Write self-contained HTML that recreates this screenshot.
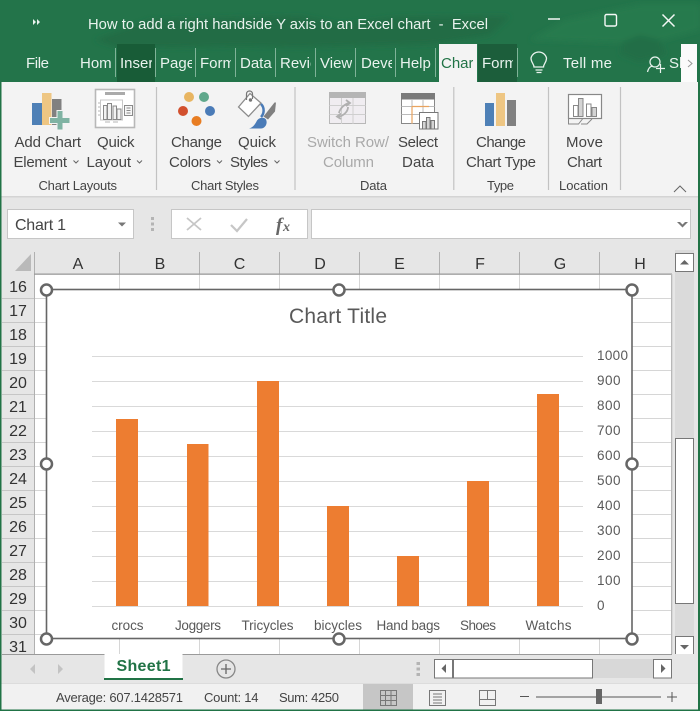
<!DOCTYPE html>
<html><head><meta charset="utf-8"><style>
html,body{margin:0;padding:0;background:#fff}
svg{display:block;font-family:"Liberation Sans",sans-serif}
.t{fill:#e9f3ee;font-size:15px}
.r{fill:#444;font-size:15px}
.g{fill:#444;font-size:13px}
.d{fill:#a9a9a9;font-size:15px}
.h{fill:#333;font-size:16px;text-anchor:middle}
.n{fill:#333;font-size:16px;text-anchor:middle}
.c{fill:#595959;font-size:13.5px}
.s{fill:#444;font-size:13px}
</style></head><body>
<svg width="700" height="711" viewBox="0 0 700 711" xmlns="http://www.w3.org/2000/svg">
<defs><filter id="b" x="-20%" y="-50%" width="140%" height="200%"><feGaussianBlur stdDeviation="3"/></filter></defs>
<rect width="700" height="711" fill="#e6e6e6"/>
<!-- title bar -->
<rect width="700" height="82" fill="#23744a"/>
<g filter="url(#b)">
<path d="M95 40 L150 20 L300 16 L340 24 L400 17 L510 16 L490 35 L430 44 L300 47 L240 46 L120 48Z" fill="#206c45"/>
<path d="M530 40 L565 20 L640 4 L700 4 L700 30 L650 44 Z" fill="#257a4e"/>
<path d="M622 42 L640 35 L660 40 L666 54 L640 62 L620 54Z" fill="#216e47"/>
</g>
<path d="M33 19 l3 3 l-3 3z M37 19 l3 3 l-3 3z" fill="#e9f3ee"/>
<text class="t" x="88" y="29" textLength="400" lengthAdjust="spacingAndGlyphs" xml:space="preserve">How to add a right handside Y axis to an Excel chart  -  Excel</text>
<path d="M548 19H560" stroke="#f4f8f6" stroke-width="1.500" fill="none"/>
<rect x="605" y="14.500" width="11.500" height="11.500" rx="1.500" fill="none" stroke="#f4f8f6" stroke-width="1.400"/>
<path d="M662.500 14.500l12 12M674.500 14.500l-12 12" stroke="#f4f8f6" stroke-width="1.500" fill="none"/>
<!-- tabs -->
<rect x="117" y="44" width="38" height="38" fill="#185c37"/>
<rect x="439" y="44" width="38" height="38" fill="#f3f3f3"/>
<rect x="478" y="44" width="39" height="38" fill="#1c5e3b"/>
<g stroke="#7fb398" stroke-width="1">
<path d="M115.500 48V77M155.500 48V77M195.500 48V77M235.500 48V77M275.500 48V77M315.500 48V77M355.500 48V77M395.500 48V77M435.500 48V77M517.500 48V77"/>
</g>
<text class="t" x="26" y="68" textLength="23">File</text>
<svg x="80" y="44" width="31" height="38"><text class="t" x="0" y="24">Hom</text></svg>
<svg x="120" y="44" width="32" height="38"><text class="t" x="0" y="24">Inser</text></svg>
<svg x="160" y="44" width="32" height="38"><text class="t" x="0" y="24">Page</text></svg>
<svg x="200" y="44" width="31" height="38"><text class="t" x="0" y="24">Form</text></svg>
<svg x="240" y="44" width="32" height="38"><text class="t" x="0" y="24">Data</text></svg>
<svg x="280" y="44" width="31" height="38"><text class="t" x="0" y="24">Revie</text></svg>
<svg x="320" y="44" width="32" height="38"><text class="t" x="0" y="24">View</text></svg>
<svg x="361" y="44" width="31" height="38"><text class="t" x="0" y="24">Deve</text></svg>
<svg x="400" y="44" width="32" height="38"><text class="t" x="0" y="24">Help</text></svg>
<svg x="441" y="44" width="32" height="38"><text class="t" x="0" y="24" style="fill:#217346">Char</text></svg>
<svg x="482" y="44" width="31" height="38"><text class="t" x="0" y="24">Form</text></svg>
<path d="M534 67c0-3-3-4.500-3-9a8 8 0 0 1 15.500 0c0 4.500-3 6-3 9zM535.500 70h7M536.500 72.500h5" fill="none" stroke="#e9f3ee" stroke-width="1.300"/>
<text class="t" x="563" y="68" textLength="49">Tell me</text>
<circle cx="655" cy="62" r="5" fill="none" stroke="#e9f3ee" stroke-width="1.200"/>
<path d="M647.500 72c1-4.500 3.500-6 5.500-6M656 68.500h9M660.500 64v9" fill="none" stroke="#e9f3ee" stroke-width="1.200"/>
<svg x="669" y="44" width="12" height="38"><text class="t" x="0" y="24">Sh</text></svg>
<rect x="681" y="44" width="16" height="38" fill="#fbfbfb"/>
<path d="M688 60l4 3.500l-4 3.500" fill="none" stroke="#999" stroke-width="1"/>
<!-- ribbon -->
<rect x="0" y="82" width="700" height="114" fill="#f3f3f3"/>
<rect x="0" y="196" width="700" height="1.500" fill="#d4d4d4"/>
<g stroke="#c2c2c2" stroke-width="1.200"><path d="M156.500 87V190M295 87V190M453.800 87V190M548.500 87V190M620.500 87V190"/></g>
<!-- add chart -->
<rect x="32" y="103" width="10" height="22" fill="#4e80b6"/>
<rect x="42" y="93" width="9.500" height="32" fill="#eec683"/>
<rect x="52" y="99" width="9.500" height="26" fill="#808080"/>
<path d="M49 117h7.500v-7h7v7h7v7h-7v7h-7v-7h-7.500z" fill="#f3f3f3"/>
<path d="M50 118h7.500v-7h5v7h7v5h-7v6.500h-5v-6.500h-7.500z" fill="#7fb3a3"/>
<!-- quick layout -->
<rect x="95.500" y="89.500" width="39" height="38" fill="#fff" stroke="#b8b8b8" stroke-width="1.600"/>
<rect x="105" y="92" width="20" height="3" fill="#aaa"/>
<rect x="100.500" y="100" width="22" height="20" fill="none" stroke="#c8c8c8"/>
<g fill="#f2f2f2" stroke="#888"><rect x="103.500" y="105.500" width="3.500" height="14"/><rect x="107.500" y="103.500" width="4" height="16"/><rect x="113" y="106" width="3.500" height="13.500"/><rect x="117" y="109" width="4" height="10.500"/></g>
<path d="M98 103h2M98 107h2M98 111h2M98 115h2M105 122h5M113 122h5" stroke="#b5b5b5" fill="none"/>
<rect x="124.500" y="105.500" width="8" height="10" fill="#f7f7f7" stroke="#8a8a8a"/>
<path d="M126.500 108h4M126.500 110.500h4M126.500 113h4" stroke="#8a8a8a" fill="none"/>
<!-- colors -->
<circle cx="189" cy="97" r="5" fill="#e8b561"/><circle cx="204" cy="97" r="5" fill="#60a88c"/>
<circle cx="183" cy="111" r="5" fill="#d2502e"/><circle cx="210" cy="111" r="5" fill="#4a7bb7"/><circle cx="196.500" cy="121" r="5" fill="#e87d22"/>
<!-- styles -->
<path d="M238.500 107L250 93.500L261 103L248.500 116.500Z" fill="#fff" stroke="#8c8c8c" stroke-width="1.300"/>
<path d="M246.500 100v-6c0-4 6-4 6 0v5" fill="none" stroke="#777" stroke-width="1.200"/>
<circle cx="250.500" cy="100" r="1.700" fill="#777"/>
<path d="M261 104c4 4 3 10 0 13" stroke="#4a7bb7" stroke-width="2.500" fill="none"/>
<path d="M249 128.500c4-1 6-4 8-8c2-3 7-4 9-1c2 4-1 9-5 9z" fill="#4a7bb7"/>
<path d="M263.500 116.500l11-14l1.500 0l-1 9l-7 8z" fill="#808080"/>
<!-- switch -->
<rect x="329.500" y="92.500" width="36" height="31" fill="#f0edf1" stroke="#b8b8b8"/>
<rect x="329" y="92" width="37" height="6" fill="#b5b5b5"/>
<path d="M341.500 98v26M353 98v26M329.500 105.500h36M329.500 114.500h36" stroke="#cfcfcf" fill="none"/>
<path d="M339 113c1-5 6-9 10-10M346 100l4 3l-4 3M348 107c0 5-5 9-10 10M341 119l-4-2.500l4-3" fill="none" stroke="#b0b0b0" stroke-width="1.800"/>
<!-- select -->
<rect x="401.500" y="93.500" width="33" height="30" fill="#fff" stroke="#888"/>
<rect x="401" y="93" width="34" height="6.500" fill="#7a7a7a"/>
<path d="M412 99v25M423 99v25M401.500 106.500h33M401.500 114.500h33" stroke="#bbb" fill="none"/>
<path d="M412 106.500h17M412 106.500v17" stroke="#e9a35f" fill="none" stroke-width="1.200"/>
<rect x="419.500" y="112.500" width="18.500" height="16.500" fill="#fff" stroke="#777"/>
<g fill="#d4d4d4" stroke="#777"><rect x="422.500" y="121.500" width="3.500" height="7.500"/><rect x="426.500" y="117.500" width="3.500" height="11.500"/><rect x="431" y="120.500" width="3.500" height="8.500"/></g>
<!-- change type -->
<rect x="485" y="103" width="9" height="23" fill="#4e80b6"/>
<rect x="496" y="93" width="9" height="33" fill="#eec683"/>
<rect x="507" y="100" width="9" height="26" fill="#808080"/>
<!-- move -->
<rect x="568.500" y="94.500" width="33" height="24" fill="#fff" stroke="#888" stroke-width="1.200"/>
<rect x="573.500" y="105.500" width="4.500" height="11" fill="#fff" stroke="#888"/>
<rect x="578.500" y="98.500" width="4.500" height="18" fill="#d4d4d4" stroke="#888"/>
<rect x="586.500" y="104" width="4.500" height="12.500" fill="#fff" stroke="#888"/>
<rect x="592" y="107.500" width="4.500" height="9" fill="#d4d4d4" stroke="#888"/>
<path d="M568.500 119v5h10l4-5M581 124h6l5-5" fill="none" stroke="#888"/>
<!-- ribbon labels -->
<text class="r" x="14.500" y="147" textLength="66.500">Add Chart</text>
<text class="r" x="13.500" y="167" textLength="53.500">Element</text>
<text class="r" x="97" y="147" textLength="37.500">Quick</text>
<text class="r" x="86.500" y="167" textLength="44.500">Layout</text>
<text class="r" x="171" y="147" textLength="51">Change</text>
<text class="r" x="169" y="167" textLength="42">Colors</text>
<text class="r" x="238" y="147" textLength="38">Quick</text>
<text class="r" x="230" y="167" textLength="38">Styles</text>
<text class="d" x="307" y="147" textLength="82">Switch Row/</text>
<text class="d" x="323" y="167" textLength="51">Column</text>
<text class="r" x="398" y="147" textLength="40">Select</text>
<text class="r" x="402" y="167" textLength="32">Data</text>
<text class="r" x="476" y="147" textLength="50">Change</text>
<text class="r" x="466" y="167" textLength="70">Chart Type</text>
<text class="r" x="566" y="147" textLength="37">Move</text>
<text class="r" x="567" y="167" textLength="35">Chart</text>
<path d="M73.500 160.500l2.500 2.500l2.500-2.500M137 160.500l2.500 2.500l2.500-2.500M217 160.500l2.500 2.500l2.500-2.500M274.500 160.500l2.500 2.500l2.500-2.500" fill="none" stroke="#666" stroke-width="1"/>
<text class="g" x="38.500" y="190" textLength="78.500">Chart Layouts</text>
<text class="g" x="191" y="190" textLength="68">Chart Styles</text>
<text class="g" x="360" y="190" textLength="27">Data</text>
<text class="g" x="487" y="190" textLength="27">Type</text>
<text class="g" x="559" y="190" textLength="49">Location</text>
<path d="M674 192l6-6l6 6" fill="none" stroke="#666" stroke-width="1"/>
<!-- formula bar -->
<rect x="7.500" y="209.500" width="126" height="29" fill="#fff" stroke="#c6c6c6"/>
<text x="15" y="230" textLength="51" style="fill:#444;font-size:16px">Chart 1</text>
<path d="M118 222.500h8l-4 4z" fill="#777"/>
<path d="M151 217h3v3h-3zM151 222.500h3v3h-3zM151 228h3v3h-3z" fill="#b4b4b4"/>
<rect x="171.500" y="209.500" width="136" height="29" fill="#fff" stroke="#c6c6c6"/>
<path d="M187 218l14 12M201 218l-14 12" stroke="#c6c6c6" stroke-width="1.800" fill="none"/>
<path d="M231 225l6 6l10-12" stroke="#c6c6c6" stroke-width="2.200" fill="none"/>
<text x="276" y="231" style="fill:#666;font:italic bold 19px 'Liberation Serif',serif">f</text><text x="283" y="231" style="fill:#666;font:italic bold 14px 'Liberation Serif',serif">x</text>
<rect x="311.500" y="209.500" width="379" height="29" fill="#fff" stroke="#c6c6c6"/>
<path d="M677 222l3 0l2.500 2.500l2.500-2.500l3 0l-5.500 5.500z" fill="#777"/>
<!-- sheet -->
<rect x="34" y="274" width="638" height="380" fill="#fff"/>
<g stroke="#d6d6d6"><path d="M119.500 274V654M199.500 274V654M279.500 274V654M359.500 274V654M439.500 274V654M519.500 274V654M599.500 274V654"/>
<path d="M34 298.500H672M34 322.500H672M34 346.500H672M34 370.500H672M34 394.500H672M34 418.500H672M34 442.500H672M34 466.500H672M34 490.500H672M34 514.500H672M34 538.500H672M34 562.500H672M34 586.500H672M34 610.500H672M34 634.500H672"/></g>
<!-- headers -->
<rect x="34" y="250" width="638" height="24" fill="#e6e6e6"/>
<g stroke="#b0b0b0"><path d="M34.500 252V654M119.500 252V274M199.500 252V274M279.500 252V274M359.500 252V274M439.500 252V274M519.500 252V274M599.500 252V274"/></g>
<rect x="34" y="273.500" width="638" height="1.300" fill="#9a9a9a"/>
<rect x="671" y="274" width="1.300" height="380" fill="#b8b8b8"/>
<polygon points="31,254 31,271 15,271" fill="#b9b9b9"/>
<text class="h" x="78" y="269">A</text><text class="h" x="160" y="269">B</text><text class="h" x="239.500" y="269">C</text><text class="h" x="320" y="269">D</text><text class="h" x="399.500" y="269">E</text><text class="h" x="480" y="269">F</text><text class="h" x="560" y="269">G</text><text class="h" x="640" y="269">H</text>
<g stroke="#c6c6c6"><path d="M2 298.500H34M2 322.500H34M2 346.500H34M2 370.500H34M2 394.500H34M2 418.500H34M2 442.500H34M2 466.500H34M2 490.500H34M2 514.500H34M2 538.500H34M2 562.500H34M2 586.500H34M2 610.500H34M2 634.500H34"/></g>
<text class="n" x="18" y="292">16</text><text class="n" x="18" y="316">17</text><text class="n" x="18" y="340">18</text><text class="n" x="18" y="364">19</text><text class="n" x="18" y="388">20</text><text class="n" x="18" y="412">21</text><text class="n" x="18" y="436">22</text><text class="n" x="18" y="460">23</text><text class="n" x="18" y="484">24</text><text class="n" x="18" y="508">25</text><text class="n" x="18" y="532">26</text><text class="n" x="18" y="556">27</text><text class="n" x="18" y="580">28</text><text class="n" x="18" y="604">29</text><text class="n" x="18" y="628">30</text><text class="n" x="18" y="652">31</text>
<!-- chart -->
<rect x="46.500" y="289.500" width="585.500" height="349" fill="#fff" stroke="#666" stroke-width="1.600"/>
<text x="338" y="323" text-anchor="middle" style="fill:#595959;font-size:21px" textLength="98">Chart Title</text>
<g stroke="#d9d9d9"><path d="M92 356.500H583M92 381.500H583M92 406.500H583M92 431.500H583M92 456.500H583M92 481.500H583M92 506.500H583M92 531.500H583M92 556.500H583M92 581.500H583M92 606.500H583"/></g>
<g fill="#ed7d31"><rect x="116" y="419" width="22" height="187"/><rect x="187" y="444" width="21.500" height="162"/><rect x="257" y="381" width="22" height="225"/><rect x="327" y="506" width="22" height="100"/><rect x="397" y="556" width="22" height="50"/><rect x="467" y="481" width="22" height="125"/><rect x="537" y="394" width="22" height="212"/></g>
<text class="c" x="597" y="360" textLength="31">1000</text><text class="c" x="597" y="385" textLength="23.500">900</text><text class="c" x="597" y="410" textLength="23.500">800</text><text class="c" x="597" y="435" textLength="23.500">700</text><text class="c" x="597" y="460" textLength="23.500">600</text><text class="c" x="597" y="485" textLength="23.500">500</text><text class="c" x="597" y="510" textLength="23.500">400</text><text class="c" x="597" y="535" textLength="23.500">300</text><text class="c" x="597" y="560" textLength="23.500">200</text><text class="c" x="597" y="585" textLength="23.500">100</text><text class="c" x="597" y="610">0</text>
<text class="c" x="111.500" y="630" textLength="32">crocs</text><text class="c" x="175" y="630" textLength="46">Joggers</text><text class="c" x="241.500" y="630" textLength="52">Tricycles</text><text class="c" x="314" y="630" textLength="48">bicycles</text><text class="c" x="376.500" y="630" textLength="63.500">Hand bags</text><text class="c" x="460" y="630" textLength="36">Shoes</text><text class="c" x="525.500" y="630" textLength="46">Watchs</text>
<g fill="#fff" stroke="#666" stroke-width="2.500"><circle cx="46.500" cy="290" r="5.500"/><circle cx="339" cy="290" r="5.500"/><circle cx="632" cy="290" r="5.500"/><circle cx="46.500" cy="464" r="5.500"/><circle cx="632" cy="464" r="5.500"/><circle cx="46.500" cy="639" r="5.500"/><circle cx="339" cy="639" r="5.500"/><circle cx="632" cy="639" r="5.500"/></g>
<!-- vertical scrollbar -->
<rect x="675" y="250" width="19" height="404" fill="#dadada"/>
<rect x="675.500" y="253.500" width="18" height="18" fill="#fff" stroke="#777"/>
<path d="M680 264.500h9l-4.500-4.500z" fill="#666"/>
<rect x="675.500" y="438.500" width="18" height="165" fill="#fff" stroke="#777"/>
<rect x="675.500" y="636.500" width="18" height="18" fill="#fff" stroke="#777"/>
<path d="M680 645h9l-4.500 4.500z" fill="#666"/>
<!-- sheet tabs -->
<rect x="2" y="654" width="696" height="29" fill="#e6e6e6"/>
<rect x="2" y="654" width="670" height="1" fill="#9a9a9a"/>
<rect x="104.500" y="654" width="78" height="25.500" fill="#fff"/>
<rect x="104" y="678" width="79" height="2" fill="#217346"/>
<text x="143.500" y="671" text-anchor="middle" textLength="54" style="fill:#217346;font-size:16px;font-weight:bold">Sheet1</text>
<path d="M35 664v10l-5-5zM58 664v10l5-5z" fill="#c3c3c3"/>
<circle cx="226" cy="669" r="9" fill="none" stroke="#888" stroke-width="1.300"/>
<path d="M221 669h10M226 664v10" stroke="#666" stroke-width="1.300"/>
<path d="M416.500 662h3.500v3h-3.500zM416.500 667.500h3.500v3h-3.500zM416.500 673h3.500v3h-3.500z" fill="#b4b4b4"/>
<rect x="453" y="659" width="219" height="19" fill="#d8d8d8"/>
<rect x="434.500" y="659.500" width="18" height="18.500" fill="#fff" stroke="#777"/>
<path d="M446 664v9l-4.500-4.500z" fill="#666"/>
<rect x="453.500" y="659.500" width="139" height="18.500" fill="#fff" stroke="#777"/>
<rect x="653.500" y="659.500" width="18" height="18.500" fill="#fff" stroke="#777"/>
<path d="M661 664v9l4.500-4.500z" fill="#666"/>
<!-- status bar -->
<rect x="0" y="683" width="700" height="28" fill="#f1f1f1"/>
<rect x="0" y="683" width="700" height="1" fill="#dcdcdc"/>
<rect x="363" y="684" width="50" height="26" fill="#c6c6c6"/>
<text class="s" x="56" y="702" textLength="127">Average: 607.1428571</text>
<text class="s" x="204" y="702" textLength="54.500">Count: 14</text>
<text class="s" x="279" y="702" textLength="60">Sum: 4250</text>
<g fill="none" stroke="#777"><path d="M380.500 690.500h16v15h-16zM385.500 690.500v15M391 690.500v15M380.500 695.500h16M380.500 700.500h16"/>
<path d="M429.500 690.500h16v15h-16zM433 694h9M433 697h9M433 700h9M433 703h9"/>
<path d="M479.500 690.500h16v15h-16zM479.500 699.500h8v-9M487.500 699.500h8" /></g>
<path d="M520 696.500h9M536 697h125M667 697h10M672 692v10" stroke="#555" stroke-width="1" fill="none"/>
<rect x="596" y="689" width="6" height="15" fill="#666"/>
<!-- window border -->
<rect x="0" y="82" width="1.500" height="629" fill="#217346"/>
<rect x="698" y="82" width="2" height="629" fill="#217346"/>
<rect x="0" y="709.500" width="700" height="1.500" fill="#217346"/>
</svg>
</body></html>
